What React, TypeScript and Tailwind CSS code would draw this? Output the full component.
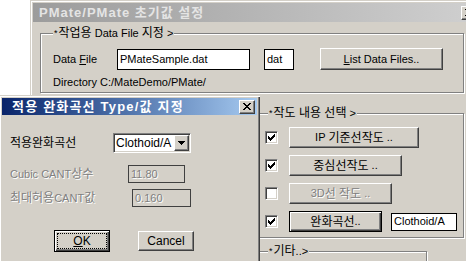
import type { ReactNode } from "react"

const raised =
  "bg-[#d4d0c8] border border-t-white border-l-white border-r-[#404040] border-b-[#404040] shadow-[inset_-1px_-1px_0_#808080]"
const defBtn =
  "bg-[#d4d0c8] border border-black shadow-[inset_1px_1px_0_#fff,inset_-1px_-1px_0_#404040,inset_-2px_-2px_0_#808080]"
const sunken =
  "border border-t-[#808080] border-l-[#808080] border-r-white border-b-white shadow-[inset_1px_1px_0_#404040,inset_-1px_-1px_0_#d4d0c8]"
const dis = "text-[#808080] [text-shadow:1px_1px_0_#fff]"
const group = "border border-[#808080] shadow-[1px_1px_0_#fff,inset_1px_1px_0_#fff]"
const legend = "bg-[#d4d0c8] leading-[14px] px-[1px]"

// korean glyphs run a bit bigger than the latin ones in the original
function K({ children }: { children: ReactNode }) {
  return <span className="text-[12px]">{children}</span>
}

function Star() {
  return <span className="text-[9px] align-top mr-[1px]">*</span>
}

function Close() {
  return (
    <span className={`w-[16px] h-[14px] shrink-0 flex items-center justify-center ${raised}`}>
      <svg width="8" height="7" viewBox="0 0 8 7" shapeRendering="crispEdges">
        <path d="M0 0h2v1h-2zM6 0h2v1h-2zM1 1h2v1h-2zM5 1h2v1h-2zM2 2h4v1h-4zM3 3h2v1h-2zM2 4h4v1h-4zM1 5h2v1h-2zM5 5h2v1h-2zM0 6h2v1h-2zM6 6h2v1h-2z" fill="#000" />
      </svg>
    </span>
  )
}

function Check({ on }: { on?: boolean }) {
  return (
    <span className={`w-[13px] h-[13px] shrink-0 bg-white flex items-center justify-center ${sunken}`}>
      {on && (
        <svg width="7" height="7" viewBox="0 0 7 7" shapeRendering="crispEdges">
          <path d="M0 2h1v3h-1zM1 3h1v3h-1zM2 4h1v3h-1zM3 3h1v3h-1zM4 2h1v3h-1zM5 1h1v3h-1zM6 0h1v3h-1z" fill="#000" />
        </svg>
      )}
    </span>
  )
}

function Btn({ children, className, def, off }: { children: ReactNode; className: string; def?: boolean; off?: boolean }) {
  return (
    <span className={`flex items-center justify-center ${def ? defBtn : raised} ${off ? dis : ""} ${className}`}>
      {children}
    </span>
  )
}

export default function App() {
  return (
    <div className="relative w-[466px] h-[261px] overflow-hidden bg-white text-[11px] text-black font-['Liberation_Sans','Noto_Sans_CJK_KR',sans-serif]">
      {/* back window, runs off the right edge */}
      <div className="absolute left-[30px] top-0 w-[452px] min-w-[452px] h-[300px] bg-[#d4d0c8] p-[3px] shadow-[inset_1px_1px_0_#d4d0c8,inset_2px_2px_0_#fff]">
        <div className="w-[446px] h-[19px] flex items-center bg-linear-to-r from-[#9c9c9c] to-[#d0d0d0] pl-[6px] pr-[2px]">
          <span className="text-[13px] font-bold text-[#e4e4e4] tracking-[1px]">PMate/PMate 초기값 설정</span>
          <span className="ml-auto">
            <Close />
          </span>
        </div>

        <fieldset className={`ml-[7px] mt-[4px] w-[424px] pl-[12px] pt-[8px] pb-[3px] ${group}`}>
          <legend className={legend}>
            <Star />
            <K>작업용</K> Data File <K>지정</K> &gt;
          </legend>
          <div className="flex items-center h-[22px]">
            <span className="w-[64px]">
              Data <span className="underline">F</span>ile
            </span>
            <span className="w-[133px] h-[21px] border border-black bg-white flex items-center pl-[2px]">PMateSample.dat</span>
            <span className="ml-[14px] w-[30px] h-[21px] border border-black bg-white flex items-center pl-[2px]">dat</span>
            <Btn className="ml-[26px] w-[123px] h-[22px]">
              <span className="underline">L</span>ist Data Files..
            </Btn>
          </div>
          <div className="mt-[5px] leading-[14px]">Directory C:/MateDemo/PMate/</div>
        </fieldset>

        <div className="ml-[224px] mt-[13px] flex flex-col">
          <fieldset className={`w-[207px] pl-[7px] pt-[7px] pb-[5px] ${group}`}>
            <legend className={`${legend} ml-[3px]`}>
              <Star />
              <K>작도 내용 선택</K> &gt;
            </legend>
            <div className="flex flex-col gap-[7px]">
              <div className="flex items-center gap-[11px]">
                <Check on />
                <Btn className="w-[130px] h-[21px]">
                  IP&nbsp;<K>기준선작도</K>&nbsp;..
                </Btn>
              </div>
              <div className="flex items-center gap-[11px]">
                <Check on />
                <Btn className="w-[113px] h-[21px]">
                  <K>중심선작도</K>&nbsp;..
                </Btn>
              </div>
              <div className="flex items-center gap-[11px]">
                <Check />
                <Btn off className="w-[103px] h-[21px]">
                  3D<K>선 작도</K>&nbsp;..
                </Btn>
              </div>
              <div className="flex items-center gap-[11px]">
                <Check on />
                <Btn def className="w-[93px] h-[21px]">
                  <K>완화곡선</K>..
                </Btn>
                <span className="ml-[-2px] w-[66px] h-[18px] border border-black bg-white flex items-center pl-[2px]">Clothoid/A</span>
              </div>
            </div>
          </fieldset>
          <fieldset className={`mt-[6px] w-[170px] h-[40px] pl-[7px] ${group}`}>
            <legend className={`${legend} ml-[3px]`}>
              <Star />
              <K>기타</K>..&gt;
            </legend>
          </fieldset>
        </div>
      </div>

      {/* front dialog */}
      <div className="absolute left-[-1px] top-[95px] w-[261px] h-[170px] bg-[#d4d0c8] p-[3px] shadow-[inset_1px_1px_0_#d4d0c8,inset_2px_2px_0_#fff,inset_-1px_-1px_0_#404040,inset_-2px_-2px_0_#808080]">
        <div className="h-[17px] flex items-center justify-between bg-linear-to-r from-[#0a246a] to-[#a6caf0] pl-[10px] pr-[2px]">
          <span className="text-[13px] font-bold text-white tracking-[1.2px]">적용 완화곡선 Type/값 지정</span>
          <Close />
        </div>
        <div className="pl-[8px] pt-[18px] flex flex-col">
          <div className="flex items-center">
            <span className="w-[103px]">
              <K>적용완화곡선</K>
            </span>
            <span className={`w-[78px] h-[20px] bg-white flex items-center justify-between pl-[2px] pr-[1px] text-[12px] ${sunken}`}>
              Clothoid/A
              <span className={`w-[15px] h-[16px] flex items-center justify-center ${raised}`}>
                <svg width="7" height="4" viewBox="0 0 7 4" shapeRendering="crispEdges">
                  <path d="M0 0h7v1h-7zM1 1h5v1h-5zM2 2h3v1h-3zM3 3h1v1h-1z" fill="#000" />
                </svg>
              </span>
            </span>
          </div>
          <div className="mt-[12px] flex items-center">
            <span className={`w-[118px] ${dis}`}>
              Cubic CANT<K>상수</K>
            </span>
            <span className={`w-[57px] h-[18px] border border-[#404040] flex items-center pl-[2px] ${dis}`}>11.80</span>
          </div>
          <div className="mt-[6px] flex items-center">
            <span className={`w-[122px] ${dis}`}>
              <K>최대허용</K>CANT<K>값</K>
            </span>
            <span className={`w-[59px] h-[18px] border border-[#404040] flex items-center pl-[2px] ${dis}`}>0.160</span>
          </div>
          <div className="mt-[23px] flex items-center text-[12px]">
            <Btn def className="ml-[44px] w-[56px] h-[22px]">
              <span className="w-[48px] h-[14px] flex items-center justify-center outline-1 outline-dotted outline-black leading-[14px]">
                <span className="underline">O</span>K
              </span>
            </Btn>
            <Btn className="ml-[28px] w-[56px] h-[20px]">Cancel</Btn>
          </div>
        </div>
      </div>
    </div>
  )
}
